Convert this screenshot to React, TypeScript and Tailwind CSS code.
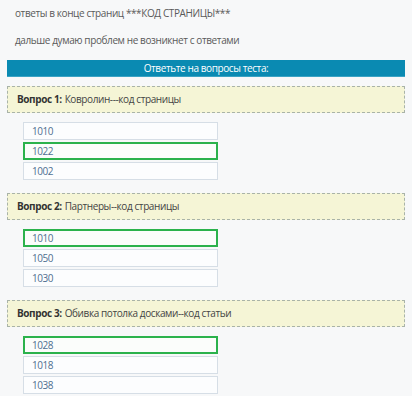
import React from "react";

type Q = { n: number; text: string; answers: string[]; sel: number };

const qs: Q[] = [
  { n: 1, text: "Ковролин---код страницы", answers: ["1010", "1022", "1002"], sel: 1 },
  { n: 2, text: "Партнеры--код страницы", answers: ["1010", "1050", "1030"], sel: 0 },
  { n: 3, text: "Обивка потолка досками--код статьи", answers: ["1028", "1018", "1038"], sel: 0 },
];

export default function App() {
  return (
    <div
      className="w-[412px] h-[396px] overflow-hidden bg-[#f7f8f9] text-[#555]"
      style={{ fontFamily: '"Open Sans", "Noto Sans", sans-serif' }}
    >
      <div className="pl-[15px] pt-[5px] text-[10px] leading-[16px] tracking-[-0.4px] text-[#5a5a5a]">
        ответы в конце страниц ***КОД СТРАНИЦЫ***
      </div>
      <div className="pl-[15px] pt-[11px] text-[10px] leading-[16px] tracking-[-0.4px] text-[#5a5a5a]">
        дальше думаю проблем не возникнет с ответами
      </div>
      <div className="ml-[7px] w-[398px] mt-[12px] h-[17px] bg-[#0a8ab2] border-b border-[#3aa3c4] flex items-center justify-center text-white text-[10px] tracking-[-0.4px]">
        Ответьте на вопросы теста:
      </div>
      <div className="mt-[9px] flex flex-col gap-[13px]">
        {qs.map((q) => (
          <div key={q.n} className="flex flex-col">
            <div className="ml-[7px] w-[398px] h-[27px] bg-[#f5f5d6] border border-dashed border-[#a9b3a8] flex items-center pl-[9px] text-[10px] tracking-[-0.4px] text-[#444]">
              <span className="font-bold mr-[3px] text-[#333]">Вопрос {q.n}:</span>
              <span>{q.text}</span>
            </div>
            <div className="mt-[9px] ml-[23px] w-[195px] flex flex-col gap-[2px]">
              {q.answers.map((a, i) =>
                i === q.sel ? (
                  <div
                    key={i}
                    className="h-[18px] border-2 border-[#2bb24c] bg-[#fbfdfb] flex items-center pl-[7px] text-[10px] tracking-[-0.5px] text-[#4f6f90]"
                  >
                    {a}
                  </div>
                ) : (
                  <div
                    key={i}
                    className="h-[18px] border border-[#d6dee6] bg-[#fcfdfe] flex items-center pl-[8px] text-[10px] tracking-[-0.5px] text-[#4f6f90]"
                  >
                    {a}
                  </div>
                )
              )}
            </div>
          </div>
        ))}
      </div>
    </div>
  );
}
